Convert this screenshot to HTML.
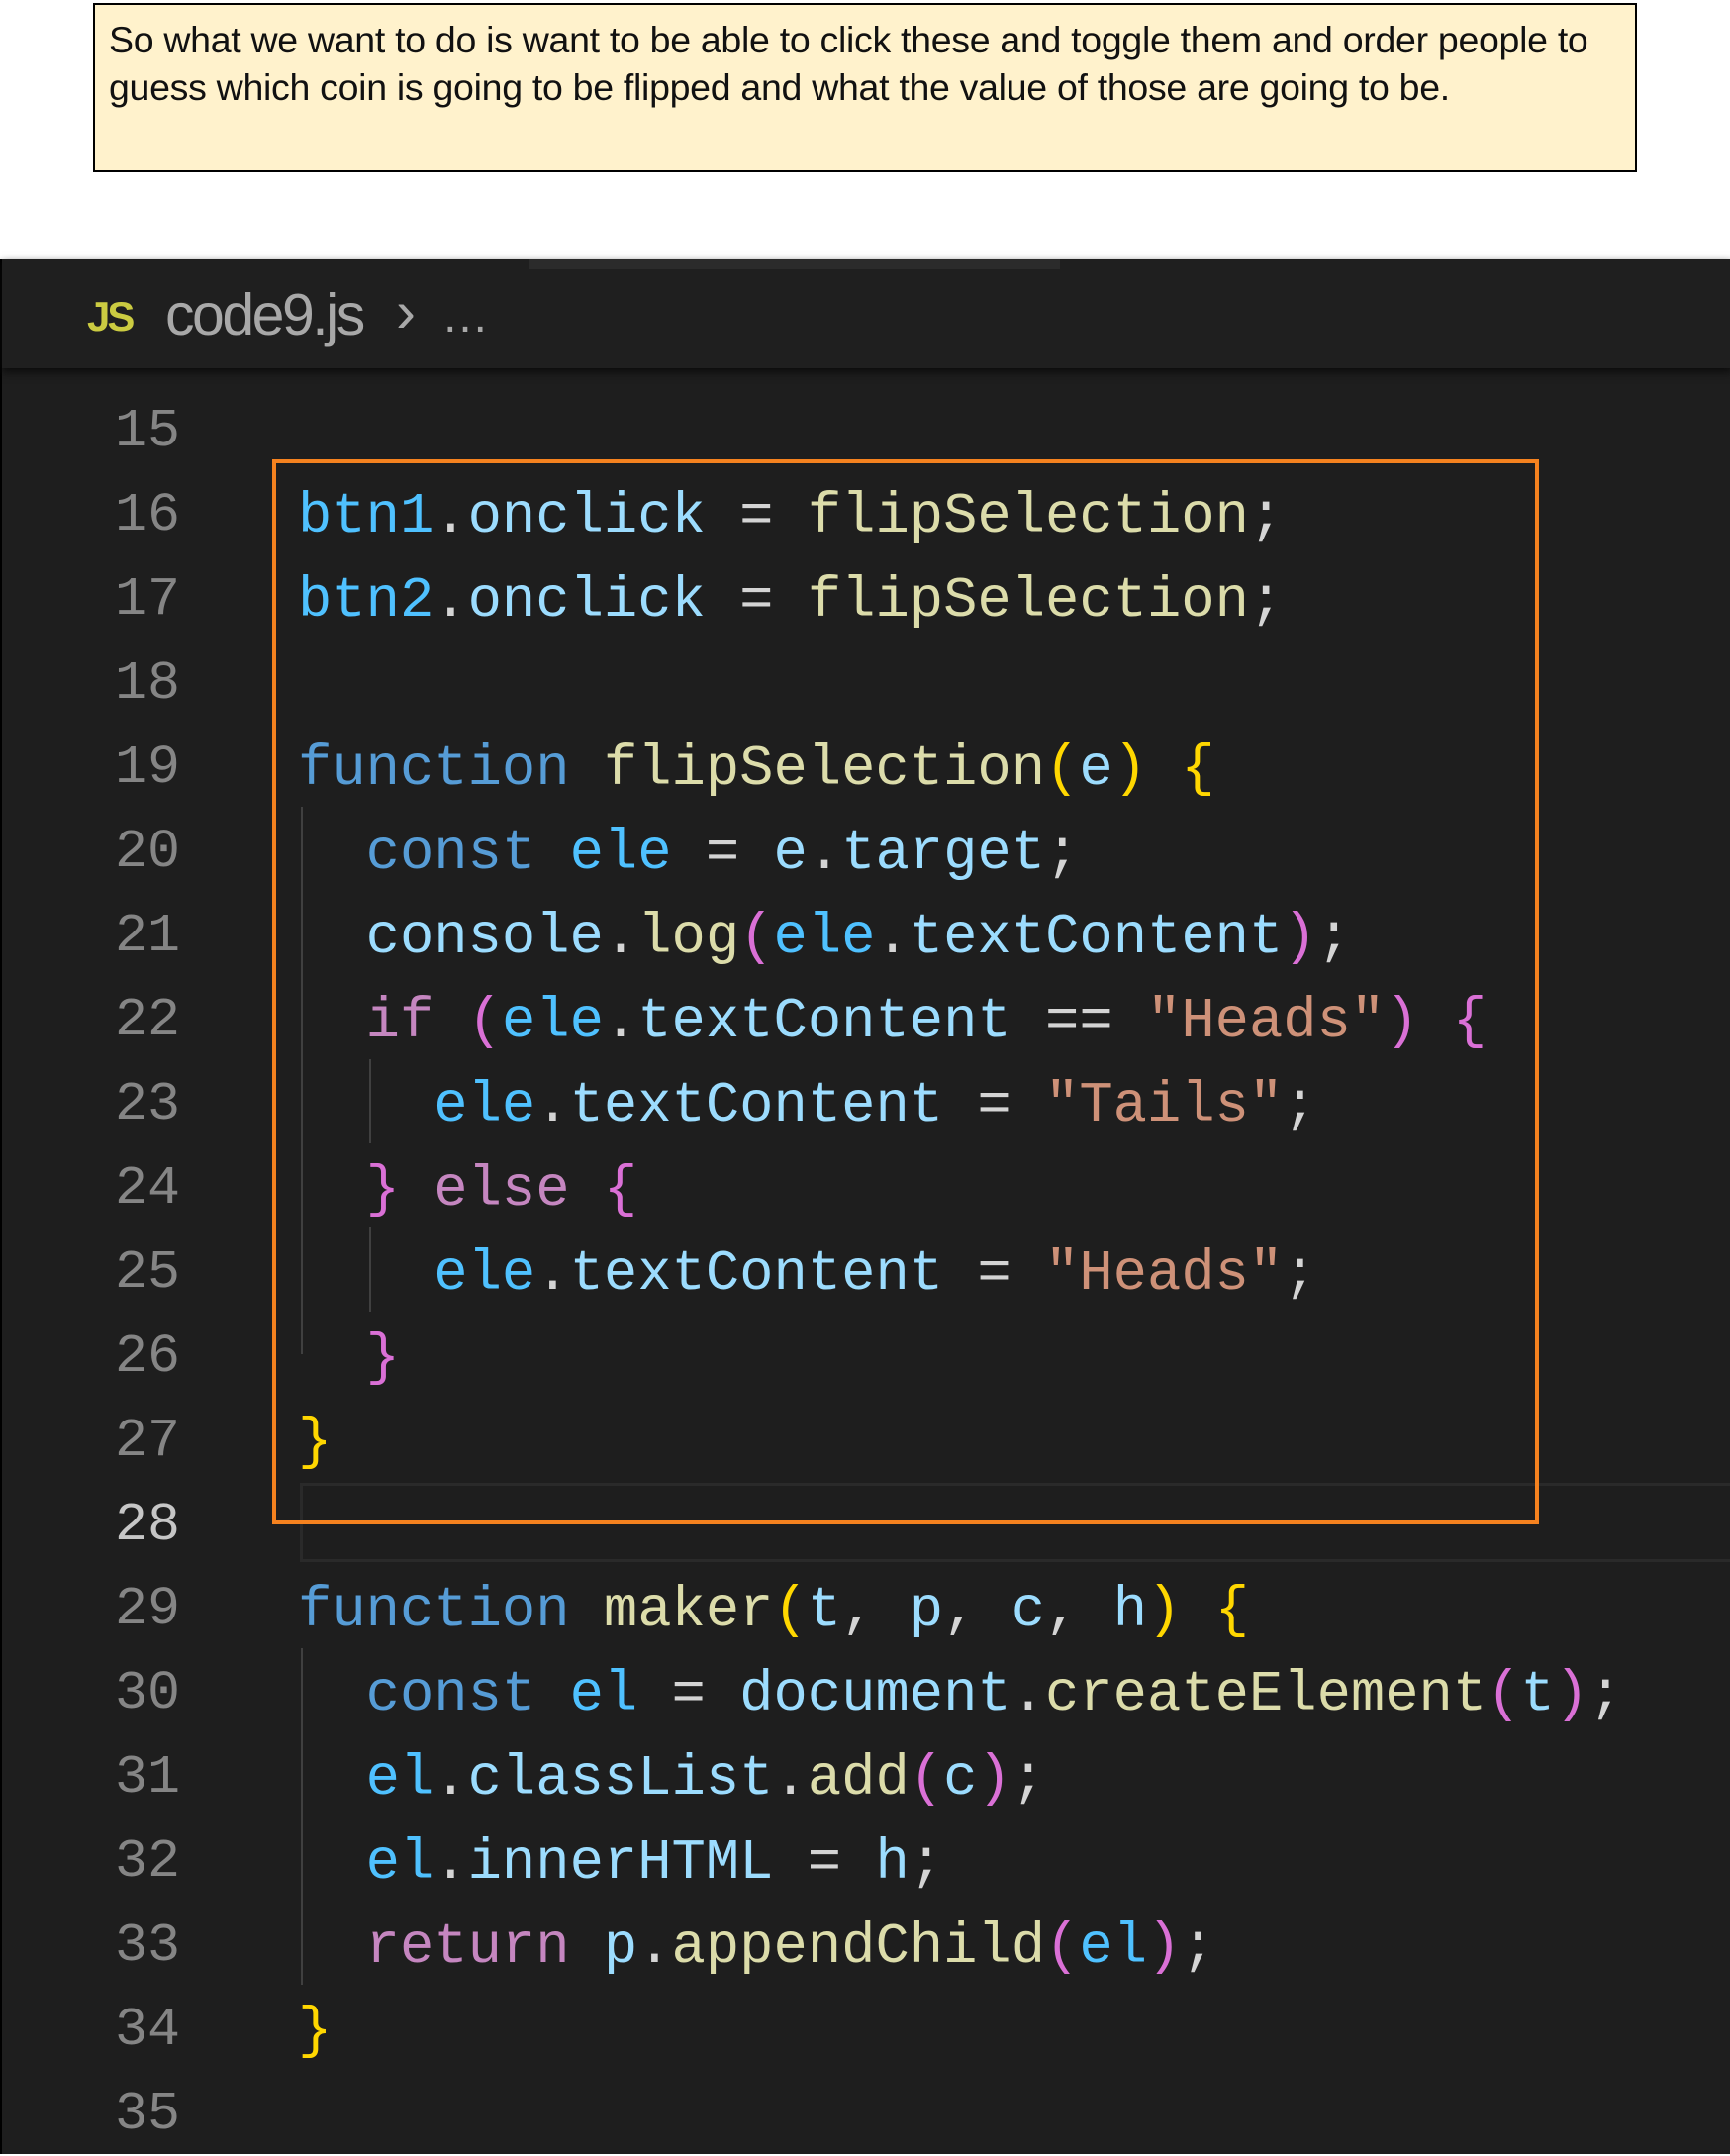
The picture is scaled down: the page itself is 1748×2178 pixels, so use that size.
<!DOCTYPE html>
<html><head><meta charset="utf-8"><style>
*{margin:0;padding:0;box-sizing:border-box}
body{width:1748px;height:2176px;background:#fff;position:relative;overflow:hidden;font-family:"Liberation Sans",sans-serif}
.note{position:absolute;left:94px;top:3px;width:1560px;height:171px;background:#fff2cc;border:2px solid #000;}
.note div{position:absolute;left:14px;white-space:nowrap;font-size:37.5px;color:#111;letter-spacing:-0.3px}
.ed{position:absolute;left:0;top:262px;width:1748px;height:1914px;background:#1e1e1e;border-left:2px solid #000}
.hdr{position:absolute;left:0;top:0;width:1748px;height:110px;background:#1f1f1f;box-shadow:0 4px 8px #0c0c0c}
.strip{position:absolute;left:532px;top:0;width:537px;height:10px;background:#2b2b2b}
.ln{position:absolute;left:0;width:182px;text-align:right;font-family:"Liberation Mono",monospace;font-size:55px;line-height:85px;color:#858585}
.cd{position:absolute;left:301px;white-space:pre;font-family:"Liberation Mono",monospace;font-size:57.2px;line-height:85px;color:#d4d4d4}
.k{color:#569cd6}.v{color:#9cdcfe}.c{color:#4fc1ff}.f{color:#dcdcaa}.p{color:#c586c0}.s{color:#ce9178}.y{color:#ffd700}.m{color:#da70d6}
.g{position:absolute;width:2px;background:#404040}
</style></head><body>
<div class="note">
<div style="top:14px">So what we want to do is want to be able to click these and toggle them and order people to</div>
<div style="top:62px">guess which coin is going to be flipped and what the value of those are going to be.</div>
</div>
<div class="ed">
<div class="hdr"><div class="strip"></div>
<div style="position:absolute;left:86px;top:34px;color:#cbcb41;font-weight:bold;font-size:42px;letter-spacing:-3px">JS</div>
<div style="position:absolute;left:165px;top:22px;color:#a8a8a8;font-size:59px;letter-spacing:-2.5px">code9.js</div>
<div style="position:absolute;left:398px;top:18px;color:#a8a8a8;font-size:60px">›</div>
<div style="position:absolute;left:444px;top:30px;color:#a8a8a8;font-size:48px">…</div>
</div>
<div style="position:absolute;left:301px;top:1236px;width:1447px;height:80px;border:3px solid #2a2a2a;border-right:none"></div>
<div class="g" style="left:302px;top:553px;height:553px"></div>
<div class="g" style="left:371px;top:808px;height:85px"></div>
<div class="g" style="left:371px;top:978px;height:85px"></div>
<div class="g" style="left:302px;top:1403px;height:340px"></div>
<div style="position:absolute;left:273px;top:202px;width:1280px;height:1076px;border:4px solid #f5821f"></div>
</div>
<div style="position:absolute;left:0;top:393px">
<div class="ln" style="top:0">15</div><div class="ln" style="top:85px">16</div><div class="ln" style="top:170px">17</div><div class="ln" style="top:255px">18</div><div class="ln" style="top:340px">19</div><div class="ln" style="top:425px">20</div><div class="ln" style="top:510px">21</div><div class="ln" style="top:595px">22</div><div class="ln" style="top:680px">23</div><div class="ln" style="top:765px">24</div><div class="ln" style="top:850px">25</div><div class="ln" style="top:935px">26</div><div class="ln" style="top:1020px">27</div><div class="ln" style="top:1105px;color:#c6c6c6">28</div><div class="ln" style="top:1190px">29</div><div class="ln" style="top:1275px">30</div><div class="ln" style="top:1360px">31</div><div class="ln" style="top:1445px">32</div><div class="ln" style="top:1530px">33</div><div class="ln" style="top:1615px">34</div><div class="ln" style="top:1700px">35</div>
</div>
<div style="position:absolute;left:0;top:395px">
<div class="cd" style="top:85px"><span class="c">btn1</span>.<span class="v">onclick</span> = <span class="f">flipSelection</span>;</div>
<div class="cd" style="top:170px"><span class="c">btn2</span>.<span class="v">onclick</span> = <span class="f">flipSelection</span>;</div>
<div class="cd" style="top:340px"><span class="k">function</span> <span class="f">flipSelection</span><span class="y">(</span><span class="v">e</span><span class="y">)</span> <span class="y">{</span></div>
<div class="cd" style="top:425px">  <span class="k">const</span> <span class="c">ele</span> = <span class="v">e</span>.<span class="v">target</span>;</div>
<div class="cd" style="top:510px">  <span class="v">console</span>.<span class="f">log</span><span class="m">(</span><span class="c">ele</span>.<span class="v">textContent</span><span class="m">)</span>;</div>
<div class="cd" style="top:595px">  <span class="p">if</span> <span class="m">(</span><span class="c">ele</span>.<span class="v">textContent</span> == <span class="s">"Heads"</span><span class="m">)</span> <span class="m">{</span></div>
<div class="cd" style="top:680px">    <span class="c">ele</span>.<span class="v">textContent</span> = <span class="s">"Tails"</span>;</div>
<div class="cd" style="top:765px">  <span class="m">}</span> <span class="p">else</span> <span class="m">{</span></div>
<div class="cd" style="top:850px">    <span class="c">ele</span>.<span class="v">textContent</span> = <span class="s">"Heads"</span>;</div>
<div class="cd" style="top:935px">  <span class="m">}</span></div>
<div class="cd" style="top:1020px"><span class="y">}</span></div>
<div class="cd" style="top:1190px"><span class="k">function</span> <span class="f">maker</span><span class="y">(</span><span class="v">t</span>, <span class="v">p</span>, <span class="v">c</span>, <span class="v">h</span><span class="y">)</span> <span class="y">{</span></div>
<div class="cd" style="top:1275px">  <span class="k">const</span> <span class="c">el</span> = <span class="v">document</span>.<span class="f">createElement</span><span class="m">(</span><span class="v">t</span><span class="m">)</span>;</div>
<div class="cd" style="top:1360px">  <span class="c">el</span>.<span class="v">classList</span>.<span class="f">add</span><span class="m">(</span><span class="v">c</span><span class="m">)</span>;</div>
<div class="cd" style="top:1445px">  <span class="c">el</span>.<span class="v">innerHTML</span> = <span class="v">h</span>;</div>
<div class="cd" style="top:1530px">  <span class="p">return</span> <span class="v">p</span>.<span class="f">appendChild</span><span class="m">(</span><span class="c">el</span><span class="m">)</span>;</div>
<div class="cd" style="top:1615px"><span class="y">}</span></div>
</div>
</body></html>
